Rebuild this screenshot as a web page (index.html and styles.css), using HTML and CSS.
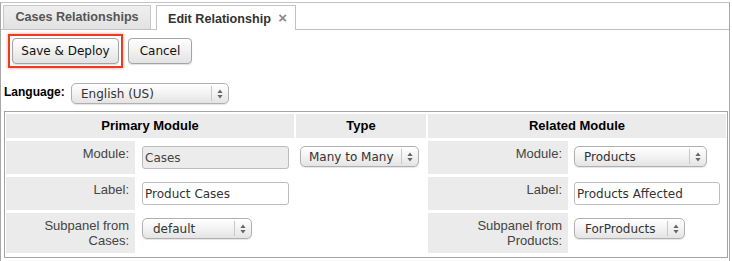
FILE: index.html
```html
<!DOCTYPE html>
<html>
<head>
<meta charset="utf-8">
<link rel="stylesheet" href="styles.css">
</head>
<body>
<div class="frame">
  <div class="tabs">
    <div class="tab">Cases Relationships</div>
    <div class="tab active">Edit Relationship <span class="close">×</span></div>
  </div>
  <div class="toolbar">
    <div class="highlight"><button class="btn save">Save &amp; Deploy</button></div>
    <button class="btn cancel">Cancel</button>
  </div>
  <div class="lang-row">
    <span class="lang-label">Language:</span>
    <span class="sel sel-lang"><select><option>English (US)</option></select><span class="arrows"><svg width="6" height="10" viewBox="0 0 6 10"><path d="M3 0.5 L5.6 4 L0.4 4 Z M3 9.5 L5.6 6 L0.4 6 Z" fill="#666"/></svg></span></span>
  </div>
  <div class="rel-table">
    <div class="th span2">Primary Module</div>
    <div class="th">Type</div>
    <div class="th span2">Related Module</div>

    <div class="lbl">Module:</div>
    <div class="val"><input class="txt disabled" value="Cases" readonly></div>
    <div class="val type-cell"><span class="sel sel-type"><select><option>Many to Many</option></select><span class="arrows"><svg width="6" height="10" viewBox="0 0 6 10"><path d="M3 0.5 L5.6 4 L0.4 4 Z M3 9.5 L5.6 6 L0.4 6 Z" fill="#666"/></svg></span></span></div>
    <div class="lbl">Module:</div>
    <div class="val right"><span class="sel sel-products"><select><option>Products</option></select><span class="arrows"><svg width="6" height="10" viewBox="0 0 6 10"><path d="M3 0.5 L5.6 4 L0.4 4 Z M3 9.5 L5.6 6 L0.4 6 Z" fill="#666"/></svg></span></span></div>

    <div class="lbl">Label:</div>
    <div class="val"><input class="txt" value="Product Cases"></div>
    <div class="val"></div>
    <div class="lbl">Label:</div>
    <div class="val right"><input class="txt txt-wide" value="Products Affected"></div>

    <div class="lbl">Subpanel from<br>Cases:</div>
    <div class="val"><span class="sel sel-default"><select><option>default</option></select><span class="arrows"><svg width="6" height="10" viewBox="0 0 6 10"><path d="M3 0.5 L5.6 4 L0.4 4 Z M3 9.5 L5.6 6 L0.4 6 Z" fill="#666"/></svg></span></span></div>
    <div class="val"></div>
    <div class="lbl">Subpanel from<br>Products:</div>
    <div class="val right"><span class="sel sel-for"><select><option>ForProducts</option></select><span class="arrows"><svg width="6" height="10" viewBox="0 0 6 10"><path d="M3 0.5 L5.6 4 L0.4 4 Z M3 9.5 L5.6 6 L0.4 6 Z" fill="#666"/></svg></span></span></div>
  </div>
</div>
</body>
</html>
```

FILE: styles.css
```css
html, body {
  margin: 0;
  padding: 0;
  background: #fff;
  overflow: hidden;
}
body {
  font-family: "Liberation Sans", Arial, sans-serif;
  font-size: 13px;
  color: #333;
}
.frame {
  margin-top: 2px;
  width: 728px;
  height: 258px;
  border-top: 1px solid #c4c4c4;
  border-left: 1px solid #a8a8a8;
  border-right: 1px solid #a8a8a8;
}
.tabs {
  display: flex;
  gap: 5px;
  padding: 2px 0 0 2px;
  border-bottom: 1px solid #c2c2c2;
  height: 24px;
}
.tab {
  box-sizing: border-box;
  height: 24px;
  width: 148px;
  border: 1px solid #c8c8c8;
  border-bottom: none;
  background: linear-gradient(#efefef, #e2e2e2);
  font-weight: bold;
  font-size: 12.6px;
  color: #555;
  line-height: 23px;
  text-align: center;
}
.tab.active {
  width: 140px;
  height: 25px;
  margin-bottom: -1px;
  background: #fff;
  border-color: #c2c2c2;
  color: #333;
  text-align: left;
  padding-left: 11px;
}
.close {
  color: #888;
  font-size: 15px;
  margin-left: 4px;
}
.toolbar {
  display: flex;
  align-items: center;
  gap: 5px;
  margin: 4px 0 0 7px;
}
.highlight {
  border: 2px solid #ee3b1f;
  padding: 2px;
  box-shadow: 0 0 3px rgba(238, 59, 31, 0.55);
  display: flex;
}
.btn {
  box-sizing: border-box;
  height: 26px;
  border: 1px solid #a4a4a4;
  border-radius: 4px;
  background: linear-gradient(#ffffff, #f1f1f1 50%, #e2e2e2);
  font-family: "DejaVu Sans", sans-serif;
  font-size: 12px;
  color: #111;
  padding: 0;
  box-shadow: 0 1px 1px rgba(0,0,0,0.12);
}
.save { width: 107px; }
.cancel { width: 64px; }
.lang-row {
  display: flex;
  align-items: flex-start;
  margin: 14px 0 0 3px;
  height: 22px;
}
.lang-label {
  font-weight: bold;
  font-size: 12px;
  color: #000;
  width: 67px;
  padding-top: 3px;
}
.sel {
  position: relative;
  display: block;
  height: 21px;
}
.sel select {
  appearance: none;
  -webkit-appearance: none;
  box-sizing: border-box;
  display: block;
  width: 100%;
  height: 21px;
  border: 1px solid #b0b0b0;
  border-radius: 5px;
  background: linear-gradient(#ffffff, #f4f4f4 45%, #e4e4e4);
  font-family: "DejaVu Sans", sans-serif;
  font-size: 12px;
  color: #333;
  padding: 0 0 0 9px;
  margin: 0;
  box-shadow: 0 1px 1px rgba(0,0,0,0.1);
}
.sel .arrows {
  position: absolute;
  right: 1px;
  top: 3px;
  bottom: 3px;
  width: 16px;
  border-left: 1px solid #c8c8c8;
  display: flex;
  align-items: center;
  justify-content: center;
  pointer-events: none;
}
.sel-lang { width: 158px; margin-top: 1px; }
.sel-type { width: 119px; }
.sel-products { width: 133px; }
.sel-default { width: 110px; }
.sel-for { width: 111px; }
.sel-type select { padding-left: 8px; }
.sel-default select, .sel-for select { padding-left: 10px; }

.rel-table {
  display: grid;
  grid-template-columns: 129px 157px 130px 140px 156px;
  column-gap: 2px;
  row-gap: 3px;
  width: 720px;
  margin: 7px 0 0 3px;
  padding: 2px 1px 4px 1px;
  border: 1px solid #a4a4a4;
}
.th {
  background: #ebebeb;
  height: 24px;
  line-height: 24px;
  text-align: center;
  font-weight: bold;
  color: #000;
}
.span2 { grid-column: span 2; }
.lbl {
  background: #ebebeb;
  text-align: right;
  padding: 5px 6px 5px 0;
  line-height: 15px;
  color: #444;
}
.val {
  display: flex;
  align-items: flex-start;
  padding: 5px 0 5px 5px;
}
.type-cell { padding-left: 4px; }
.val.right { padding-left: 4px; }
.txt {
  box-sizing: border-box;
  display: block;
  width: 147px;
  height: 23px;
  border: 1px solid #bdbdbd;
  border-radius: 3px;
  font-family: "DejaVu Sans", sans-serif;
  font-size: 12px;
  color: #333;
  padding: 0 0 0 2px;
  margin: 0;
  background: #fff;
}
.txt.disabled {
  background: #ececec;
  color: #444;
}
.txt-wide { width: 146px; }
```
